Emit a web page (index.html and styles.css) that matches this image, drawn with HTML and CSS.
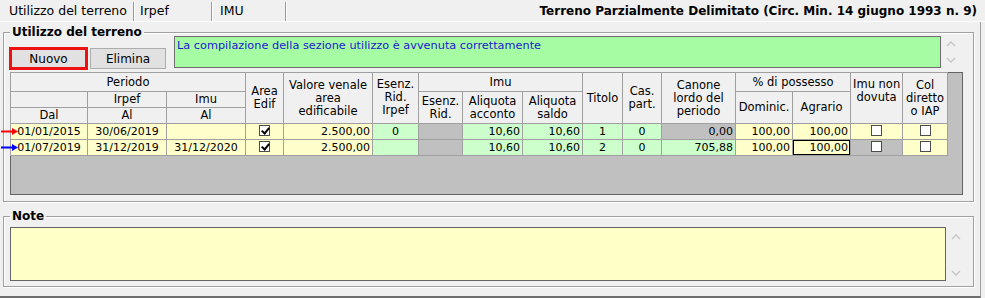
FILE: index.html
```html
<!DOCTYPE html>
<html lang="it">

<head>
    <meta charset="UTF-8">
    <title>Terreno Parzialmente Delimitato</title>
    <link rel="stylesheet" href="styles.css">
</head>

<body>
    <div class="window">
        <!-- Tabs -->
        <div class="tabbar">
            <div class="tabs">
                <div class="tab active">Utilizzo del terreno</div>
                <div class="tab tab-irpef">Irpef</div>
                <div class="tab tab-imu">IMU</div>
            </div>
            <div class="title">Terreno Parzialmente Delimitato (Circ. Min. 14 giugno 1993 n. 9)</div>
        </div>

        <div class="panel">
            <!-- Utilizzo del terreno -->
            <div class="group group-use">
                <span class="group-label">Utilizzo del terreno</span>
                <div class="toolbar">
                    <button class="btn btn-new">Nuovo</button>
                    <button class="btn btn-del">Elimina</button>
                    <div class="message">La compilazione della sezione utilizzo è avvenuta correttamente</div>
                    <div class="scroller">
                        <svg width="10" height="7" viewBox="0 0 10 7"><path d="M1 6 L5 2 L9 6" fill="none" stroke="#c4c4c4" stroke-width="1.3"/></svg>
                        <svg width="10" height="7" viewBox="0 0 10 7"><path d="M1 1 L5 5 L9 1" fill="none" stroke="#c4c4c4" stroke-width="1.3"/></svg>
                    </div>
                </div>

                <div class="grid">
                    <table class="data">
                        <colgroup>
                            <col style="width:77px"><col style="width:79px"><col style="width:79px"><col style="width:38px">
                            <col style="width:89px"><col style="width:46px"><col style="width:44px"><col style="width:60px">
                            <col style="width:60px"><col style="width:40px"><col style="width:39px"><col style="width:74px">
                            <col style="width:57px"><col style="width:58px"><col style="width:52px"><col style="width:45px">
                        </colgroup>
                        <tr class="h1">
                            <th colspan="3">Periodo</th>
                            <th rowspan="3">Area<br>Edif</th>
                            <th rowspan="3">Valore venale<br>area<br>edificabile</th>
                            <th rowspan="3" class="top">Esenz.<br>Rid.<br>Irpef</th>
                            <th colspan="3">Imu</th>
                            <th rowspan="3">Titolo</th>
                            <th rowspan="3">Cas.<br>part.</th>
                            <th rowspan="3">Canone<br>lordo del<br>periodo</th>
                            <th colspan="2">% di possesso</th>
                            <th rowspan="3" class="top">Imu non<br>dovuta</th>
                            <th rowspan="3">Col<br>diretto<br>o IAP</th>
                        </tr>
                        <tr class="h2">
                            <th></th>
                            <th>Irpef</th>
                            <th>Imu</th>
                            <th rowspan="2">Esenz.<br>Rid.</th>
                            <th rowspan="2">Aliquota<br>acconto</th>
                            <th rowspan="2">Aliquota<br>saldo</th>
                            <th rowspan="2">Dominic.</th>
                            <th rowspan="2">Agrario</th>
                        </tr>
                        <tr class="h3">
                            <th>Dal</th>
                            <th>Al</th>
                            <th>Al</th>
                        </tr>
                        <tr>
                            <td class="y c">01/01/2015</td>
                            <td class="y c">30/06/2019</td>
                            <td class="y c"></td>
                            <td class="y c"><span class="chk on"></span></td>
                            <td class="y r">2.500,00</td>
                            <td class="g c">0</td>
                            <td class="k"></td>
                            <td class="g r">10,60</td>
                            <td class="g r">10,60</td>
                            <td class="g c">1</td>
                            <td class="g c">0</td>
                            <td class="k r">0,00</td>
                            <td class="y r">100,00</td>
                            <td class="y r">100,00</td>
                            <td class="y c"><span class="chk"></span></td>
                            <td class="y c"><span class="chk"></span></td>
                        </tr>
                        <tr>
                            <td class="y c">01/07/2019</td>
                            <td class="y c">31/12/2019</td>
                            <td class="y c">31/12/2020</td>
                            <td class="y c"><span class="chk on"></span></td>
                            <td class="y r">2.500,00</td>
                            <td class="g c"></td>
                            <td class="k"></td>
                            <td class="g r">10,60</td>
                            <td class="g r">10,60</td>
                            <td class="g c">2</td>
                            <td class="g c">0</td>
                            <td class="g r">705,88</td>
                            <td class="y r">100,00</td>
                            <td class="y r focus">100,00</td>
                            <td class="k c"><span class="chk"></span></td>
                            <td class="y c"><span class="chk"></span></td>
                        </tr>
                    </table>
                </div>

                <!-- row markers -->
                <svg class="marker marker-red" width="18" height="7" viewBox="0 0 18 7"><path d="M0 3.5 H13" stroke="#ff0000" stroke-width="2"/><path d="M11 0 L17 3.5 L11 7 Z" fill="#ff0000"/></svg>
                <svg class="marker marker-blue" width="18" height="7" viewBox="0 0 18 7"><path d="M0 3.5 H13" stroke="#0000ff" stroke-width="2"/><path d="M11 0 L17 3.5 L11 7 Z" fill="#0000ff"/></svg>
            </div>

            <!-- Note -->
            <div class="group group-note">
                <span class="group-label">Note</span>
                <div class="note-row">
                    <div class="note-box"></div>
                    <div class="scroller scroller-note">
                        <svg width="10" height="7" viewBox="0 0 10 7"><path d="M1 6 L5 2 L9 6" fill="none" stroke="#c4c4c4" stroke-width="1.3"/></svg>
                        <svg width="10" height="7" viewBox="0 0 10 7"><path d="M1 1 L5 5 L9 1" fill="none" stroke="#c4c4c4" stroke-width="1.3"/></svg>
                    </div>
                </div>
            </div>
        </div>
    </div>
</body>

</html>
```

FILE: styles.css
```css
* {
    box-sizing: border-box;
    margin: 0;
    padding: 0;
}

body {
    background: #f0f0f0;
    font-family: "DejaVu Sans", Verdana, sans-serif;
    font-size: 11px;
    color: #000;
}

.window {
    width: 985px;
    height: 298px;
    overflow: hidden;
}

/* Tabs */
.tabbar {
    display: flex;
    justify-content: space-between;
    height: 22px;
    border-bottom: 1px solid #fff;
}

.tabs {
    display: flex;
    padding-left: 3px;
    padding-top: 2px;
}

.tab {
    height: 19px;
    padding-left: 6px;
    font-size: 12.5px;
    line-height: 18px;
    border-right: 1px solid #9a9a9a;
    box-shadow: 1px 0 0 #fff;
}

.tab.active {
    width: 131px;
}

.tab-irpef {
    width: 78px;
}

.tab-imu {
    width: 74px;
    padding-left: 8px;
}

.title {
    font-weight: bold;
    font-size: 12px;
    line-height: 23px;
    padding-right: 8px;
}

/* Panel */
.panel {
    height: 276px;
    padding-top: 10px;
    border-bottom: 2px solid #6e6e6e;
    border-right: 1px solid #a0a0a0;
    margin-right: 4px;
}

.group {
    position: relative;
    margin-left: 3px;
    width: 971px;
    border: 1px solid #a0a0a0;
    box-shadow: 1px 1px 0 #fff, inset 1px 1px 0 #fff;
}

.group-label {
    position: absolute;
    top: -9px;
    left: 6px;
    padding: 0 2px;
    background: #f0f0f0;
    font-weight: bold;
    font-size: 12px;
    line-height: 16px;
}

.group-use {
    height: 170px;
    padding: 3px 10px 0 5px;
}

.toolbar {
    display: flex;
    align-items: flex-end;
    height: 34px;
}

.btn {
    font-family: "DejaVu Sans", Verdana, sans-serif;
    font-size: 12px;
    color: #000;
    background: #e1e1e1;
    border: 1px solid #adadad;
}

.btn-new {
    width: 79px;
    height: 23px;
    border: 3px solid #ee1111;
}

.btn-del {
    width: 76px;
    height: 21px;
    margin-left: 2px;
    margin-bottom: 1px;
}

.message {
    align-self: flex-start;
    width: 767px;
    height: 32px;
    margin-left: 8px;
    padding: 2px 2px;
    background: #a6fca2;
    border: 1px solid #707070;
    color: #1a1ad0;
    font-size: 11.3px;
    line-height: 14px;
}

.scroller {
    align-self: flex-start;
    display: flex;
    flex-direction: column;
    justify-content: space-between;
    align-items: center;
    width: 20px;
    height: 30px;
    padding: 4px 0 2px;
}

/* Grid */
.grid {
    width: 953px;
    height: 123px;
    margin-top: 2px;
    margin-left: 1px;
    background: #c0c0c0;
    border: 1px solid #646464;
}

.data {
    table-layout: fixed;
    width: 938px;
    border-collapse: collapse;
    margin: -1px 0 0 -1px;
}

.data th,
.data td {
    border: 1px solid #a0a0a0;
    padding: 0 2px;
    white-space: nowrap;
    overflow: hidden;
}

.data th {
    background: #f0f0f0;
    font-weight: normal;
    font-size: 11.5px;
    line-height: 13px;
}

.data th.top {
    vertical-align: top;
    padding-top: 5px;
}

.data .h1 th {
    height: 19px;
}

.data .h2 th,
.data .h3 th {
    height: 16px;
}

.data td {
    height: 16px;
    line-height: 14px;
}

.data td.y {
    background: #ffffcc;
}

.data td.g {
    background: #ccffcc;
}

.data td.k {
    background: #c0c0c0;
}

.data td.c {
    text-align: center;
}

.data td.r {
    text-align: right;
}

.data td.focus {
    box-shadow: inset 0 0 0 1px #000;
}

.chk {
    display: inline-block;
    width: 11px;
    height: 11px;
    background: #fff;
    border: 1px solid #4c4c4c;
    vertical-align: -1px;
    position: relative;
}

.chk.on::after {
    content: "";
    position: absolute;
    left: 3px;
    top: 0px;
    width: 3px;
    height: 6px;
    border: solid #000;
    border-width: 0 2px 2px 0;
    transform: rotate(40deg);
}

.marker {
    position: absolute;
    left: -3px;
}

.marker-red {
    top: 95px;
}

.marker-blue {
    top: 111px;
}

/* Note */
.group-note {
    height: 71px;
    margin-top: 14px;
    padding: 10px 0 0 6px;
}

.note-row {
    display: flex;
}

.note-box {
    width: 936px;
    height: 54px;
    background: #ffffc8;
    border: 1px solid #646464;
}

.scroller-note {
    height: 54px;
    padding: 6px 0 4px;
    width: 20px;
}
```
